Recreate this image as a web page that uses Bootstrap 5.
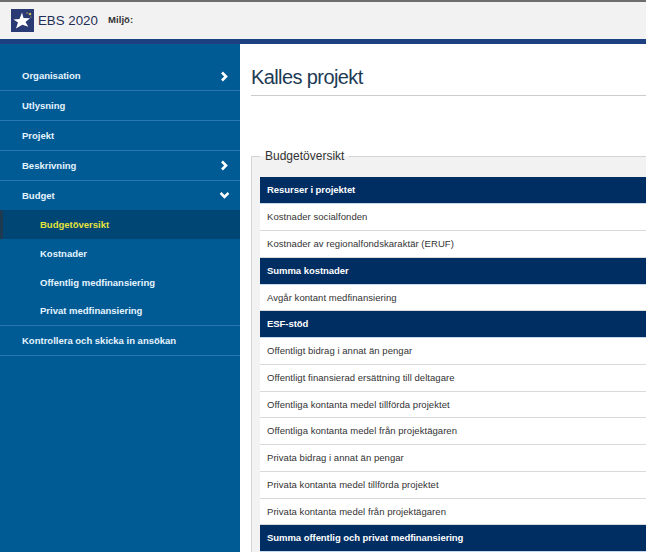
<!DOCTYPE html>
<html lang="sv">
<head>
<meta charset="utf-8">
<title>EBS 2020</title>
<link href="https://cdn.jsdelivr.net/npm/bootstrap@5.3.0/dist/css/bootstrap.min.css" rel="stylesheet">
<style>
html,body{height:552px;overflow:hidden}
body{font-family:"Liberation Sans",Arial,sans-serif;background:#fff;color:#333}
.topbar{height:44px;background:#f2f2f2;border-top:2px solid #6e6e6e;border-bottom:5px solid #1c4080;padding-left:11px}
.logo-box{width:23px;height:23px;flex:none}
.app-name{font-size:13.3px;color:#1f2f55;margin-left:4px;line-height:23px}
.env-label{font-size:9.5px;font-weight:700;color:#333;margin-left:10px;letter-spacing:.1px}
.shell{height:508px}
.side{width:240px;flex:none;background:#005b94;padding-top:17px}
.side-item{height:30px;padding:0 11px 0 22px;font-size:9.5px;line-height:30px;color:#e6f4ff;font-weight:700;border-bottom:1px solid #2a76b0;text-decoration:none}
.side-first{padding-top:1px}
.side-open{height:29px;line-height:29px;border-bottom:0}
.side-sub{height:29px;line-height:29px;padding-left:40px;border-bottom:0}
.side-sub.is-current{background:#004674;color:#e6e23c;border-left:3px solid #1d3a50;padding-left:37px}
.side-sub.last-sub{height:29px;line-height:28px;border-bottom:1px solid #2a76b0}
.chev{width:9px;height:11px;flex:none}
.main-pane{min-width:0;padding:0 0 0 11px;overflow:hidden}
.page-title{font-size:20px;letter-spacing:-.6px;line-height:28px;margin:19px 0 0;padding-bottom:3px;color:#1d3a55;border-bottom:1px solid #ccc;font-weight:400;height:33px}
.budget-box{margin:54px -40px 0 0;padding:0 0 0 8px;border:1px solid #d4d4d4;background:#f2f2f2;min-width:0}
.budget-box legend{float:none;width:auto;font-size:12px;line-height:13px;margin:0 0 14px 0;padding:0 5px;color:#333}
.budget-table{background:#fff;margin:0;border-collapse:collapse;width:100%}
.budget-table td{font-size:9.5px;letter-spacing:.05px;padding:.6px 7px 0;height:26.75px;line-height:14px;vertical-align:middle;border:0;border-bottom:1px solid #d9d9d9;color:#333;background:#fff}
.budget-table tr.head-row td{background:#002d62;color:#fff;font-weight:700;letter-spacing:-.05px;border-bottom:1px solid #c7d8ea}
</style>
</head>
<body>
<header class="topbar d-flex align-items-center">
  <svg class="logo-box" viewBox="0 0 23 23" aria-hidden="true">
    <rect width="23" height="23" fill="#2a3a75"/>
    <path d="M11 3.500l1.500 5.500 6.500.3-4.500 3.700 2.800 4.800-6-2L5 19.500l2-6-4.500-3 6-.5z" fill="#fff"/>
    <circle cx="19" cy="5" r="1.300" fill="#c9b84a"/><circle cx="16" cy="4" r=".7" fill="#c9b84a"/><circle cx="20" cy="8" r=".6" fill="#c9b84a"/>
  </svg>
  <span class="app-name">EBS 2020</span>
  <span class="env-label">Miljö:</span>
</header>
<div class="shell d-flex">
  <nav class="side d-flex flex-column">
    <a class="side-item side-first d-flex justify-content-between align-items-center" href="#"><span>Organisation</span><svg class="chev" viewBox="0 0 9 11"><path d="M2 1.500l4 4-4 4" fill="none" stroke="#fff" stroke-width="2.600"/></svg></a>
    <a class="side-item d-block" href="#">Utlysning</a>
    <a class="side-item d-block" href="#">Projekt</a>
    <a class="side-item d-flex justify-content-between align-items-center" href="#"><span>Beskrivning</span><svg class="chev" viewBox="0 0 9 11"><path d="M2 1.500l4 4-4 4" fill="none" stroke="#fff" stroke-width="2.600"/></svg></a>
    <a class="side-item side-open d-flex justify-content-between align-items-center" href="#"><span>Budget</span><svg class="chev" viewBox="0 0 9 11"><path d="M.5 3l4 4 4-4" fill="none" stroke="#fff" stroke-width="2.600"/></svg></a>
    <a class="side-item side-sub is-current d-block" href="#">Budgetöversikt</a>
    <a class="side-item side-sub d-block" href="#">Kostnader</a>
    <a class="side-item side-sub d-block" href="#">Offentlig medfinansiering</a>
    <a class="side-item side-sub last-sub d-block" href="#">Privat medfinansiering</a>
    <a class="side-item d-block" href="#">Kontrollera och skicka in ansökan</a>
  </nav>
  <main class="main-pane flex-grow-1">
    <h1 class="page-title">Kalles projekt</h1>
    <fieldset class="budget-box">
      <legend>Budgetöversikt</legend>
      <table class="table budget-table">
        <tbody>
          <tr class="head-row"><td>Resurser i projektet</td></tr>
          <tr><td>Kostnader socialfonden</td></tr>
          <tr><td>Kostnader av regionalfondskaraktär (ERUF)</td></tr>
          <tr class="head-row"><td>Summa kostnader</td></tr>
          <tr><td>Avgår kontant medfinansiering</td></tr>
          <tr class="head-row"><td>ESF-stöd</td></tr>
          <tr><td>Offentligt bidrag i annat än pengar</td></tr>
          <tr><td>Offentligt finansierad ersättning till deltagare</td></tr>
          <tr><td>Offentliga kontanta medel tillförda projektet</td></tr>
          <tr><td>Offentliga kontanta medel från projektägaren</td></tr>
          <tr><td>Privata bidrag i annat än pengar</td></tr>
          <tr><td>Privata kontanta medel tillförda projektet</td></tr>
          <tr><td>Privata kontanta medel från projektägaren</td></tr>
          <tr class="head-row"><td>Summa offentlig och privat medfinansiering</td></tr>
        </tbody>
      </table>
    </fieldset>
  </main>
</div>
<script src="https://cdn.jsdelivr.net/npm/bootstrap@5.3.0/dist/js/bootstrap.bundle.min.js"></script>
</body>
</html>
